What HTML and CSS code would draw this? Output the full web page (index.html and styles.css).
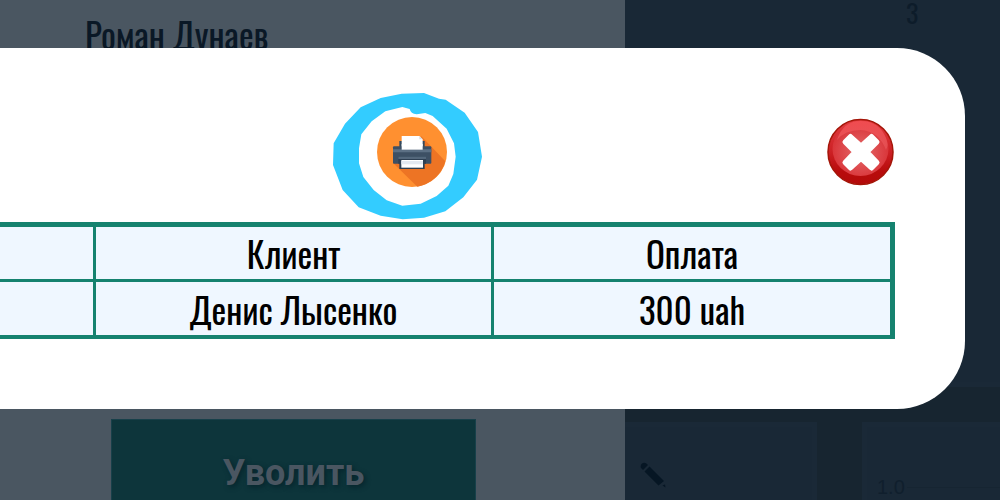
FILE: index.html
```html
<!DOCTYPE html>
<html lang="ru">
<head>
<meta charset="utf-8">
<title>Роман Дунаев</title>
<link rel="stylesheet" href="styles.css">
</head>
<body>
<div class="page">
  <section class="profile">
    <h1 class="name">Роман Дунаев</h1>
    <button class="fire" type="button">Уволить</button>
  </section>
  <section class="dashboard">
    <div class="panel summary"><span class="count">3</span></div>
    <div class="panels">
      <div class="panel edit">
        <svg class="pencil" viewBox="0 0 26 26" aria-hidden="true"><path d="M1 6Q0 3 2 1.500Q5-.5 8 3L3 8ZM4.500 9.500L9.500 4.500L24 19L18.500 23.500ZM22.500 23.500L25 22.500L25.500 25.500Z"/></svg>
      </div>
      <div class="panel chart">
        <span class="tick">1.0</span>
        <span class="axis"></span>
      </div>
    </div>
  </section>
</div>
<div class="modal" role="dialog" aria-label="Оплата">
  <div class="toolbar">
    <button class="icon-button print" type="button" aria-label="Печать">
      <svg class="print-icon" viewBox="39 39 474 381" aria-hidden="true">
        <path fill="#33ccff" fill-rule="evenodd" d="M41 190L75 131L122 82L182 54L245 41L312 39L357 56L377 59L434 98L474 156L486 230L471 299L430 352L376 394L312 413L248 418L182 407L116 382L68 330L39 255ZM117 205L124 163L155 124L196 94L247 81L269 87Q272 101 290 103L316 99L338 108L380 146L402 190L407 230L400 282L385 317L350 348L302 371L247 377L200 361L161 330L130 291L117 250Z"/>
        <circle cx="276" cy="216" r="105" fill="#ff9030"/>
        <path fill="#ed7424" d="M304 169L376 244A105 105 0 0 1 292 320L220 250Z"/>
        <path fill="#34495c" d="M238 183H314V212H238Z"/>
        <path fill="#fff" d="M245 168H298L308 178V210H245Z"/>
        <path fill="#d5dce2" d="M298 168V178H308Z"/>
        <rect x="219" y="199" width="115" height="52" rx="3" fill="#3d5064"/>
        <path fill="#5c7084" d="M219 208H334V217H219Z"/>
        <path fill="#fff" d="M245 192H308V209H245Z"/>
        <path fill="#2e4053" d="M235 230H318V251H314V267H238V251H235Z"/>
        <path fill="#53677b" d="M235 230H318V237H235Z"/>
        <path fill="#fff" d="M244 240H309V263H244Z"/>
        <path fill="#e3e9f1" d="M244 243H309V253H244Z"/>
      </svg>
    </button>
    <button class="icon-button close" type="button" aria-label="Закрыть">
      <svg class="close-icon" viewBox="0 0 68 68" aria-hidden="true">
        <defs>
          <radialGradient id="face" cx=".5" cy=".55" r=".55">
            <stop offset="0" stop-color="#e46c6c"/>
            <stop offset=".7" stop-color="#dc4246"/>
            <stop offset="1" stop-color="#d83034"/>
          </radialGradient>
          <linearGradient id="rim" x1="0" y1="0" x2="0" y2="1">
            <stop offset="0" stop-color="#e23c40"/>
            <stop offset=".5" stop-color="#cc2024"/>
            <stop offset=".8" stop-color="#b80c0c"/>
            <stop offset="1" stop-color="#b40a0a"/>
          </linearGradient>
          <linearGradient id="gloss" x1="0" y1="0" x2="0" y2="1">
            <stop offset="0" stop-color="#f04c50"/>
            <stop offset="1" stop-color="#ec6064" stop-opacity=".5"/>
          </linearGradient>
        </defs>
        <circle cx="33.500" cy="34" r="32.500" fill="url(#rim)" stroke="#a41508" stroke-width="1.500"/>
        <ellipse cx="33.500" cy="31" rx="28" ry="27" fill="url(#face)"/>
        <path fill="url(#gloss)" d="M10 22Q16 3 33.500 3Q52 3 59 20Q62 27 59 32Q52 13 33.500 12Q18 12 10 22Z"/>
        <path fill="#fff" stroke="#fff" stroke-width="5" stroke-linejoin="round" d="M23.500 18.500L34 28L44.500 18.500L50 24L40 34L50 44.500L44.500 50L34 40.500L23.500 50L18 44.500L28 34L18 24Z"/>
      </svg>
    </button>
  </div>
  <table class="payments">
    <thead>
      <tr><th class="lead"></th><th class="client">Клиент</th><th>Оплата</th></tr>
    </thead>
    <tbody>
      <tr><td></td><td>Денис Лысенко</td><td>300 uah</td></tr>
    </tbody>
  </table>
</div>
</body>
</html>
```
FILE: styles.css
```css
* {
  box-sizing: border-box;
}

body {
  margin: 0;
  min-height: 100vh;
  overflow: hidden;
  background: #172530;
  font-family: Oswald, "Liberation Sans Narrow", "Roboto Condensed", "Liberation Sans", sans-serif;
  font-weight: 400;
}

.page {
  display: grid;
  grid-template-columns: 5fr 3fr;
  min-height: 100vh;
}

.profile {
  display: flex;
  flex-direction: column;
  justify-content: space-between;
  background: #4a5661;
}

.name {
  margin: 0;
  padding: 10px 0 0 85px;
  color: #0a1826;
  font-size: 35px;
  font-weight: 400;
  line-height: 48px;
}

.fire {
  width: 365px;
  margin: 0 0 0 111px;
  padding: 27px 0 0;
  border: 1px solid #17404a;
  border-bottom: 0;
  background: #0d353b;
  color: #4a5661;
  font-family: Roboto, sans-serif;
  font-size: 36px;
  font-weight: 700;
  line-height: 53px;
  text-shadow: 2px 2px 5px #06242c;
}

.dashboard {
  display: flex;
  flex-direction: column;
  gap: 35px;
  min-width: 0;
}

.panel {
  border: 5px solid #1a2937;
  background: #192836;
}

.summary {
  height: 387px;
  flex: none;
  border-width: 0 0 5px;
  padding-left: 281px;
}

.count {
  display: block;
  color: #0d1c2a;
  font-size: 26px;
  line-height: 26px;
}

.panels {
  display: grid;
  grid-template-columns: 192px 1fr;
  gap: 45px;
  flex: 1;
}

.edit {
  border-width: 5px 5px 0 0;
  padding: 35px 15px 0;
}

.pencil {
  display: block;
  width: 26px;
  height: 26px;
  fill: #061624;
}

.chart {
  display: flex;
  align-items: flex-start;
  border-width: 5px 0 0 5px;
  padding: 48px 0 0 10px;
}

.tick {
  color: #101f2d;
  font-family: "Liberation Sans", sans-serif;
  font-size: 20px;
  line-height: 24px;
}

.axis {
  flex: 1;
  height: 12px;
  margin: 12px 0 0 2px;
  border-top: 1px solid #162532;
}

.modal {
  position: absolute;
  top: 48px;
  right: 35px;
  left: -141px;
  padding: 45px 70px 70px;
  border-radius: 68px;
  background: #fff;
}

.toolbar {
  display: grid;
  grid-template-columns: 1fr auto 1fr;
  align-items: center;
  margin-bottom: 2px;
}

.icon-button {
  padding: 0;
  border: 0;
  background: none;
  cursor: pointer;
}

.print {
  grid-column: 2;
}

.print-icon {
  display: block;
  width: 158px;
  height: 127px;
}

.close {
  justify-self: end;
  margin-bottom: 10px;
}

.close-icon {
  display: block;
  width: 68px;
  height: 68px;
}

.payments {
  width: 100%;
  table-layout: fixed;
  border: 5px solid #15826f;
  border-bottom-width: 4px;
  border-spacing: 0;
  background: #eff7ff;
  color: #000;
  font-size: 35px;
  line-height: 52px;
  text-align: center;
}

.payments th,
.payments td {
  padding: 0;
  border-right: 3px solid #15826f;
  font-weight: 400;
}

.payments th {
  height: 55px;
  border-bottom: 3px solid #15826f;
}

.payments td {
  height: 53px;
}

.payments th:last-child,
.payments td:last-child {
  border-right: 0;
}

.payments .lead {
  width: 162px;
}

.payments .client {
  width: 398px;
}
```
